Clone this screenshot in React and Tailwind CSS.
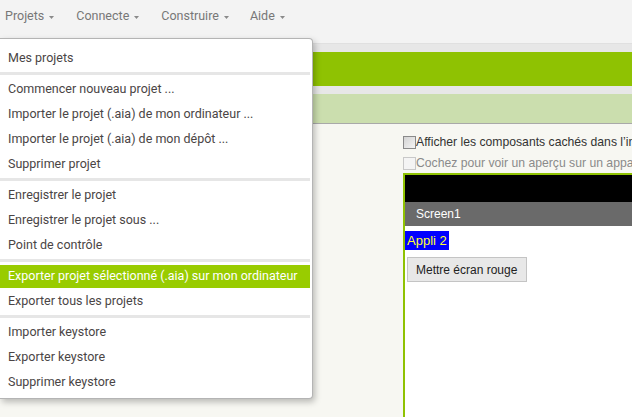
import React from 'react';

const topMenus = ['Projets', 'Connecte', 'Construire', 'Aide'];

const menuGroups = [
  ['Mes projets'],
  [
    'Commencer nouveau projet ...',
    'Importer le projet (.aia) de mon ordinateur ...',
    'Importer le projet (.aia) de mon dépôt ...',
    'Supprimer projet',
  ],
  ['Enregistrer le projet', 'Enregistrer le projet sous ...', 'Point de contrôle'],
  ['Exporter projet sélectionné (.aia) sur mon ordinateur', 'Exporter tous les projets'],
  ['Importer keystore', 'Exporter keystore', 'Supprimer keystore'],
];

const selected = 'Exporter projet sélectionné (.aia) sur mon ordinateur';

const Caret = () => (
  <svg width="5" height="3" viewBox="0 0 5 3" className="ml-[5px] mt-[1px] shrink-0">
    <path d="M0 0h5L2.5 3z" fill="#8a8a8a" />
  </svg>
);

const Checkbox = ({ disabled }) => (
  <span
    className={
      'shrink-0 inline-block w-[13px] h-[13px] border ' +
      (disabled
        ? 'border-[#c8c8c8] bg-[#f4f4f4]'
        : 'border-[#8a8a8a] bg-gradient-to-br from-[#d4d4d4] to-[#f4f4f4]')
    }
  />
);

const ProjectsMenu = () => (
  <div className="absolute left-0 top-[38px] w-[313px] bg-white border border-l-0 border-[#b4b4b4] rounded-r-[4px] shadow-[2px_3px_6px_rgba(0,0,0,0.25)] pt-[7px] pb-[3px] pr-[2px] text-[12.5px]">
    {menuGroups.map((group, gi) => (
      <div key={gi}>
        {gi > 0 && <div className="mt-[1px] mb-[2px] h-[3px] bg-[#e6e6e6]" />}
        {group.map((item) => (
          <div key={item} className="h-[25px] flex items-center">
            <div
              className={
                'w-full flex items-center pl-[8px] ' +
                (item === selected ? 'h-[23px] bg-[#99cc00] text-white' : 'h-[25px] text-[#4a4545]')
              }
            >
              {item}
            </div>
          </div>
        ))}
      </div>
    ))}
  </div>
);

export default function App() {
  return (
    <div className="relative w-[632px] h-[417px] overflow-hidden bg-[#f7f7f2] font-['Roboto',sans-serif] text-[13px]">
      <div className="h-[44px] bg-[#f3f3f3] border-b border-[#e0e0e0] flex items-start pt-[8px] text-[#777] text-[12.5px]">
        {topMenus.map((m, i) => (
          <div
            key={m}
            className={
              'flex items-center h-[17px] ' +
              ['ml-[5px]', 'ml-[22px]', 'ml-[22px]', 'ml-[21px]'][i]
            }
          >
            {m}
            <Caret />
          </div>
        ))}
      </div>
      <div className="h-[8px] bg-[#e7e7e7]" />
      <div className="h-[34px] bg-[#8fc202]" />
      <div className="h-[8px] bg-[#e7e7e7]" />
      <div className="h-[30px] bg-[#cbdeae] border-b border-[#a9a9a9]" />

      <div className="pl-[403px] pt-[12px] font-['Liberation_Sans',sans-serif] text-[12.2px]">
        <div className="flex items-center h-[13px] whitespace-nowrap text-[#333]">
          <Checkbox />
          <span>Afficher les composants cachés dans l’interface</span>
        </div>
        <div className="flex items-center h-[13px] mt-[8px] whitespace-nowrap text-[#8a8a8a]">
          <Checkbox disabled />
          <span>Cochez pour voir un aperçu sur un appareil</span>
        </div>
        <div className="mt-[3px] w-[400px] h-[300px] border-l-2 border-t-2 border-[#8fc202] bg-white text-[12px]">
          <div className="h-[27px] bg-black" />
          <div className="h-[24px] bg-[#6a6a6a] text-white flex items-center pl-[11px]">Screen1</div>
          <div className="mt-[5px] inline-flex items-center h-[19px] px-[2px] bg-[#0000ff] text-[#ffff33] text-[13px]">
            Appli 2
          </div>
          <div className="mt-[7px] ml-[2px] w-[120px] h-[25px] bg-[#e8e8e8] border border-[#c4c4c4] flex items-center pl-[8px] text-[#222]">
            Mettre écran rouge
          </div>
        </div>
      </div>

      <ProjectsMenu />
    </div>
  );
}
